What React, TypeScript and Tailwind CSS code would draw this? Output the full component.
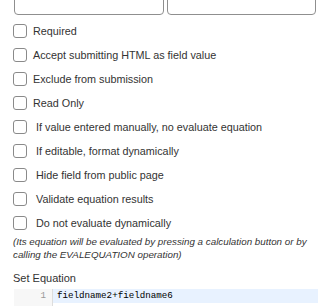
const FIRST = ['Required', 'Accept submitting HTML as field value', 'Exclude from submission', 'Read Only']

const SECOND = [
  'If value entered manually, no evaluate equation',
  'If editable, format dynamically',
  'Hide field from public page',
  'Validate equation results',
  'Do not evaluate dynamically',
]

function Box() {
  return <span className="block w-[14px] h-[14px] shrink-0 rounded-[3px] border border-[#8a8a8a] bg-white" />
}

export default function App() {
  return (
    <div className="w-[330px] h-[306px] overflow-hidden bg-white text-[#333] font-['Liberation_Sans',Arial,sans-serif]">
      <div className="flex gap-[3px] pl-[14px] pr-[14px] -mt-[16px]">
        <div className="flex-1 h-[31px] rounded-[4px] border border-[#8f8f8f]" />
        <div className="flex-1 h-[31px] rounded-[4px] border border-[#8f8f8f]" />
      </div>

      <div className="pl-[13px] pt-[4px]">
        {FIRST.map(label => (
          <div key={label} className="flex items-center gap-[6px] h-[24px] text-[10.8px]">
            <Box />
            <span>{label}</span>
          </div>
        ))}
        {SECOND.map(label => (
          <div key={label} className="flex items-center gap-[9px] h-[24px] text-[10.8px]">
            <Box />
            <span>{label}</span>
          </div>
        ))}
        <p className="pr-[12px] text-[9.8px] leading-[13px] italic">
          (Its equation will be evaluated by pressing a calculation button or by calling the EVALEQUATION operation)
        </p>
        <div className="mt-[10px] text-[11px] leading-[14px]">Set Equation</div>
      </div>

      <div className="mt-[4px] ml-[14px] mr-[12px] flex font-['Liberation_Mono',monospace] text-[9.2px]">
        <div className="w-[39px] h-[40px] shrink-0 bg-[#f7f7f7] border-r border-[#ddd] text-right pr-[6px] text-[#999] leading-[14px]">1</div>
        <div className="flex-1">
          <div className="bg-[#e8f2ff] pl-[4px] leading-[14px] text-black">fieldname2+fieldname6</div>
        </div>
      </div>
    </div>
  )
}
